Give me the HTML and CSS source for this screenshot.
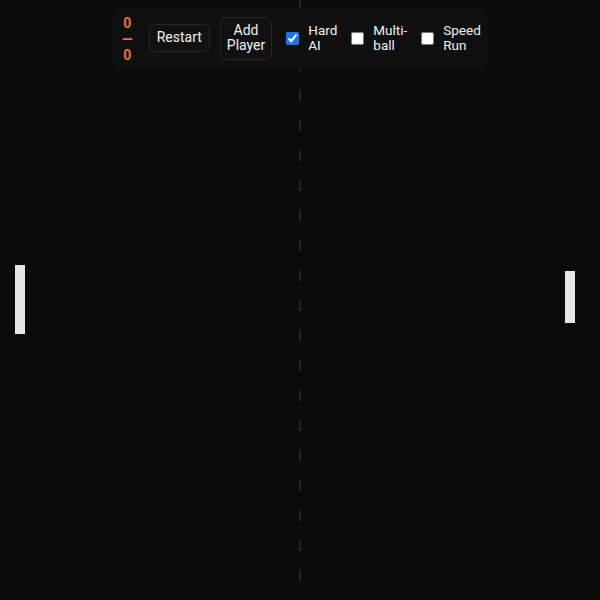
FILE: index.html
```html
<!DOCTYPE html>
<html>
<head>
<meta charset="utf-8">
<link rel="stylesheet" href="styles.css">
</head>
<body>
<div class="court">
  <div class="midline"></div>
  <div class="paddle paddle-left"></div>
  <div class="paddle paddle-right"></div>
  <div class="toolbar">
    <div class="score">0 — 0</div>
    <button class="btn btn-restart">Restart</button>
    <button class="btn btn-add">Add Player</button>
    <label class="opt"><input type="checkbox" checked><span>Hard AI</span></label>
    <label class="opt"><input type="checkbox"><span>Multi-ball</span></label>
    <label class="opt"><input type="checkbox"><span>Speed Run</span></label>
  </div>
</div>
</body>
</html>
```
FILE: styles.css
```css
html, body {
  margin: 0;
  padding: 0;
  background: #0b0b0b;
  width: 600px;
  height: 600px;
  overflow: hidden;
  font-family: Roboto, "Liberation Sans", sans-serif;
}
.court {
  position: relative;
  width: 600px;
  height: 600px;
  background: #0b0b0b;
}
.midline {
  position: absolute;
  left: 299px;
  top: 0;
  width: 2px;
  height: 582px;
  background: repeating-linear-gradient(to bottom, #232323 0 11px, transparent 11px 30px);
}
.paddle {
  position: absolute;
  width: 10px;
  background: #e6e6e6;
}
.paddle-left {
  left: 15px;
  top: 265px;
  height: 69px;
}
.paddle-right {
  left: 565px;
  top: 271px;
  height: 52px;
}
.toolbar {
  position: absolute;
  left: 112px;
  top: 8px;
  width: 376px;
  height: 60px;
  box-sizing: border-box;
  padding: 0 10px;
  display: flex;
  align-items: center;
  gap: 10px;
  background: #0f0f0f;
  border-radius: 8px;
}
.score {
  width: min-content;
  text-align: center;
  color: #e8703f;
  font-weight: 700;
  font-size: 14px;
  line-height: 16px;
  margin-right: 6px;
  margin-top: 2px;
}
.btn {
  font-family: Roboto, "Liberation Sans", sans-serif;
  font-size: 14px;
  line-height: 15.5px;
  color: #f0f0f0;
  background: #111111;
  border: 1px solid #262626;
  border-radius: 6px;
  padding: 5px 7px;
  width: min-content;
  margin: 0;
}
.btn-add {
  padding: 5px 6px;
}
.opt {
  display: flex;
  align-items: center;
  color: #f0f0f0;
  font-size: 13.5px;
  line-height: 15.5px;
}
.opt input {
  width: 13px;
  height: 13px;
  margin: 0 3px 0 4px;
  accent-color: #1a73e8;
}
.opt span {
  width: min-content;
  margin-left: 6px;
}
```
